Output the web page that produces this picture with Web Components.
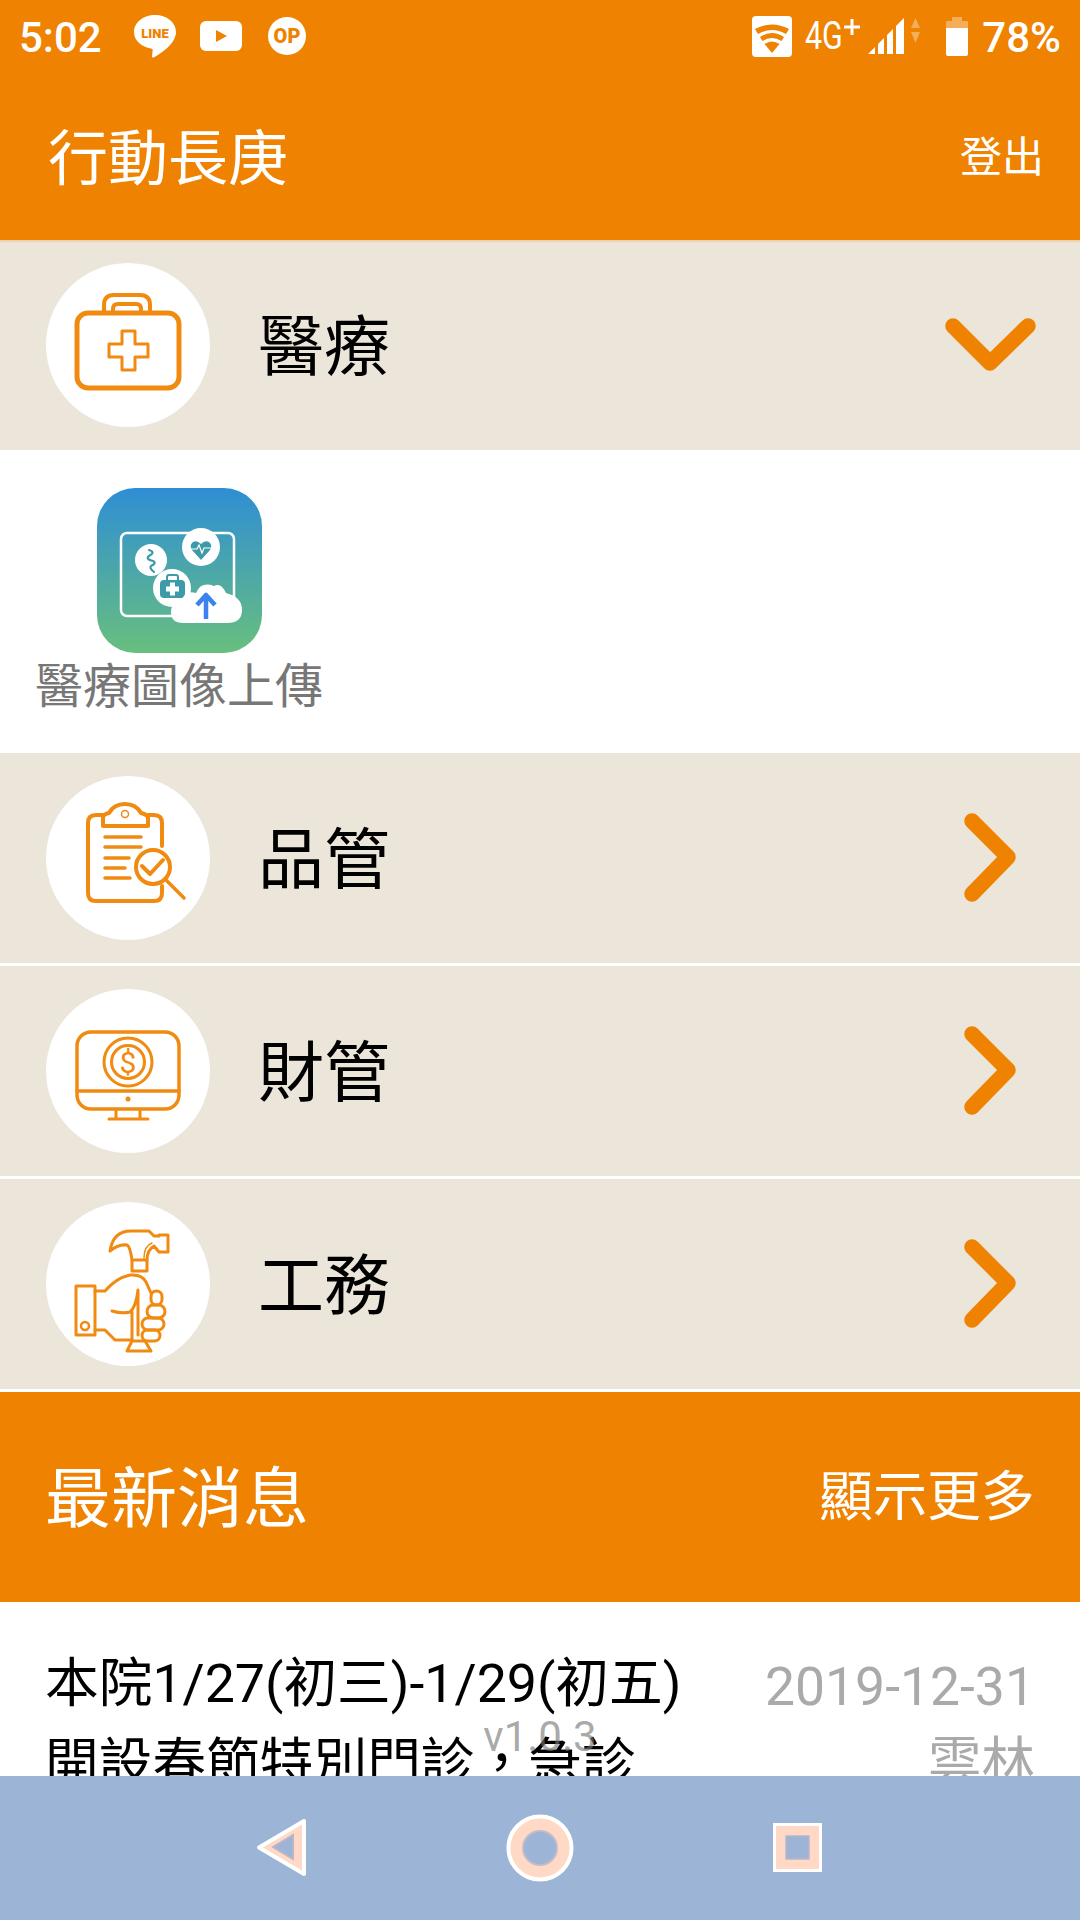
<!DOCTYPE html>
<html lang="zh-Hant">
<head>
<meta charset="utf-8">
<title>行動長庚</title>
<style>
  html, body { margin: 0; padding: 0; }
  body { width: 1080px; height: 1920px; overflow: hidden; background: #fff; font-family: Roboto, "Noto Sans CJK TC", sans-serif; }
</style>
</head>
<body>
<app-shell>
  <status-bar></status-bar>
  <top-bar title="行動長庚" action="登出"></top-bar>
  <menu-row label="醫療" arrow="down" class="first"><line-icon slot="icon" name="kit"></line-icon></menu-row>
  <app-tray><app-tile label="醫療圖像上傳"></app-tile></app-tray>
  <menu-row label="品管" arrow="right"><line-icon slot="icon" name="clipboard"></line-icon></menu-row>
  <menu-row label="財管" arrow="right" class="sep"><line-icon slot="icon" name="monitor"></line-icon></menu-row>
  <menu-row label="工務" arrow="right" class="sep"><line-icon slot="icon" name="hammer"></line-icon></menu-row>
  <news-bar title="最新消息" more="顯示更多"></news-bar>
  <news-item date="2019-12-31" place="雲林">本院1/27(初三)-1/29(初五)<br>開設春節特別門診，急診</news-item>
  <version-tag>v1.0.3</version-tag>
  <nav-bar></nav-bar>
</app-shell>

<script>
const ORANGE = '#ef8200'

class AppShell extends HTMLElement {
    constructor() {
        super()
        this.attachShadow({ mode: 'open' }).innerHTML = `
            <style>
                :host { display: flex; flex-direction: column; position: relative; width: 1080px; height: 1920px; overflow: hidden; background: #fff; }
            </style>
            <slot></slot>`
    }
}

class StatusBar extends HTMLElement {
    constructor() {
        super()
        this.attachShadow({ mode: 'open' }).innerHTML = `
            <style>
                :host { display: flex; align-items: center; height: 72px; flex: none; background: ${ORANGE}; color: #fff; font: 500 42px Roboto, sans-serif; box-sizing: border-box; padding: 0 19px; }
                svg { display: block; flex: none; }
                .time { width: 115px; padding-top: 2px; }
                .left { display: flex; align-items: center; gap: 24px; }
                .right { display: flex; align-items: center; margin-left: auto; }
                .net { font-size: 38px; font-weight: 400; transform: scaleX(.8); transform-origin: left center; width: 38px; margin-left: 13px; }
                .pct { margin-left: 14px; padding-top: 2px; }
            </style>
            <div class="time">5:02</div>
            <div class="left">
                <svg width="42" height="44" viewBox="0 0 42 44">
                    <path d="M21 1C9.500 1 0 8.400 0 18c0 9 8 15 17 16.500 1.500.3 2 1 1.500 3l-.5 5c0 1 1 1.500 2 .8C28 39 42 29 42 18 42 8.400 32.500 1 21 1z" fill="#fff"/>
                    <text x="21" y="24" font-family="Roboto" font-size="13" font-weight="900" fill="${ORANGE}" text-anchor="middle">LINE</text>
                </svg>
                <svg width="42" height="30" viewBox="0 0 42 30">
                    <rect width="42" height="30" rx="6" fill="#fff"/>
                    <path d="M16 9l11 6-11 6z" fill="${ORANGE}"/>
                </svg>
                <svg width="38" height="38" viewBox="0 0 38 38" style="margin-left:2px">
                    <circle cx="19" cy="19" r="19" fill="#fff"/>
                    <text x="19" y="26" font-family="Roboto" font-size="20" font-weight="900" fill="${ORANGE}" text-anchor="middle">OP</text>
                </svg>
            </div>
            <div class="right">
                <svg width="40" height="41" viewBox="0 0 40 41">
                    <rect width="40" height="41" rx="4" fill="#fff"/>
                    <path d="M3 13Q20 4 37 13L34 18Q20 10 6 18z" fill="${ORANGE}"/>
                    <path d="M8 21Q20 13 32 21L29.500 25Q20 19 10.500 25z" fill="${ORANGE}"/>
                    <path d="M12.500 28Q20 23 27.500 28L20 37z" fill="${ORANGE}"/>
                </svg>
                <div class="net">4G</div>
                <svg width="18" height="18" viewBox="0 0 18 18" style="margin-top:-18px">
                    <path d="M7.500 1h3v6.500H17v3h-6.500V17h-3v-6.500H1v-3h6.500z" fill="#fff"/>
                </svg>
                <svg width="54" height="38" viewBox="0 0 54 38" style="margin-left:7px">
                    <path d="M0 37L7 30V37zM10 27L16 21V37H10zM19 18L25 12V37H19zM28 9L36 1V37H28z" fill="#fff"/>
                    <path d="M47.500 1L52 11H43zM43 15H52L47.500 26z" fill="#fff" fill-opacity=".35"/>
                </svg>
                <svg width="22" height="39" viewBox="0 0 22 39" style="margin-left:24px">
                    <path d="M6 0h10v4h5a1 1 0 0 1 1 1v6H0V5a1 1 0 0 1 1-1h5z" fill="#fff" fill-opacity=".35"/>
                    <path d="M0 11h22v26a2 2 0 0 1-2 2H2a2 2 0 0 1-2-2z" fill="#fff"/>
                </svg>
                <div class="pct">78%</div>
            </div>`
    }
}

class TopBar extends HTMLElement {
    constructor() {
        super()
        this.attachShadow({ mode: 'open' }).innerHTML = `
            <style>
                :host { display: flex; align-items: center; justify-content: space-between; flex: none; height: 168px; box-sizing: border-box; background: ${ORANGE}; color: #fff; padding: 0 36px 6px 48px; font-family: "Noto Sans CJK TC", sans-serif; }
                .title { font-size: 60px; }
                .action { font-size: 42px; }
            </style>
            <div class="title">${this.getAttribute('title')}</div>
            <div class="action">${this.getAttribute('action')}</div>`
    }
}

class MenuRow extends HTMLElement {
    constructor() {
        super()
        const arrow = this.getAttribute('arrow') === 'down'
            ? 'M13 31L50 68L88 31'
            : 'M32 13L68 49L32 86'
        this.attachShadow({ mode: 'open' }).innerHTML = `
            <style>
                :host { display: flex; align-items: center; flex: none; height: 210px; background: #ebe5da; padding: 0 40px 0 46px; box-sizing: border-box; font-family: "Noto Sans CJK TC", sans-serif; color: #000; }
                :host(.sep) { margin-top: 3px; }
                :host(.first) { background: linear-gradient(rgba(239,130,0,.25), transparent 3px), #ebe5da; }
                .circle { width: 164px; height: 164px; border-radius: 50%; background: #fff; flex: none; }
                .label { font-size: 66px; margin-left: 48px; flex: 1; padding-bottom: 8px; }
                svg { display: block; flex: none; }
            </style>
            <div class="circle"><slot name="icon"></slot></div>
            <div class="label">${this.getAttribute('label')}</div>
            <svg width="100" height="100" viewBox="0 0 100 100">
                <path d="${arrow}" fill="none" stroke="${ORANGE}" stroke-width="15.500" stroke-linecap="round" stroke-linejoin="round"/>
            </svg>`
    }
}

const ICONS = {
    kit: `
        <rect x="31" y="50" width="102" height="75" rx="11" stroke-width="5"/>
        <path d="M58 49v-7q0-10 10-10h26q10 0 10 10v7M67 49v-3q0-5 5-5h18q5 0 5 5v3" stroke-width="4"/>
        <path d="M76 68h13v13h13v13H89v13H76V94H63V81h13z" stroke-width="3"/>`,
    clipboard: `
        <path d="M57 39H50q-8 0-8 8V117q0 8 8 8H108q8 0 8-8v-7M102 39h6q8 0 8 8V70" stroke-width="4"/>
        <path d="M57 50h45v-9q-2-3-7-4Q90 28 79 28T63 37q-5 1-6 4z" stroke-width="4"/>
        <circle cx="79" cy="38" r="3.500" stroke-width="1.500"/>
        <path d="M59 61H95M59 71H95M59 82H83M59 92H79M59 102H84" stroke-width="3.500"/>
        <circle cx="107" cy="91" r="17" stroke-width="4"/>
        <path d="M96 90L104 98L117 84" stroke-width="4"/>
        <path d="M119 103L138 122" stroke-width="3.500"/>`,
    monitor: `
        <rect x="31" y="43" width="102" height="77" rx="14" stroke-width="3.500"/>
        <path d="M31 102H133" stroke-width="3.500"/>
        <circle cx="82" cy="110" r="2.500" fill="#f18a10" stroke="none"/>
        <circle cx="82" cy="73" r="24" stroke-width="3"/>
        <circle cx="82" cy="73" r="16.500" stroke-width="3"/>
        <path d="M70 120V130M94 120V130M63 130H102" stroke-width="3"/>
        <text x="82" y="84" font-family="Roboto" font-size="30" fill="#f18a10" stroke="none" text-anchor="middle">$</text>`,
    hammer: `
        <path d="M86 58Q84 44 81 43Q72 42 64 49Q67 29 85 29H103L108 34H113V33H122V50H113L108 44Q101 48 101 58" stroke-width="3"/>
        <path d="M98 56Q98 44 106 41" stroke-width="1.500"/>
        <rect x="86" y="58" width="15" height="11" stroke-width="3"/>
        <rect x="30" y="84" width="19" height="49" stroke-width="3"/>
        <circle cx="39" cy="124" r="4" stroke-width="2.500"/>
        <path d="M49 89H59Q70 76 84 73Q96 72 100 80L105 91" stroke-width="3"/>
        <path d="M49 128H59L69 138H86" stroke-width="3"/>
        <path d="M66 109Q76 112 84 110Q90 105 92 88V133" stroke-width="3"/>
        <path d="M86 110V139M99 139H86L81 149H105L99 139" stroke-width="3"/>
        <rect x="105" y="89" width="11" height="14" rx="5.500" stroke-width="3"/>
        <rect x="101" y="103" width="18" height="13" rx="6.500" stroke-width="3"/>
        <rect x="96" y="116" width="22" height="12" rx="6" stroke-width="3"/>
        <rect x="96" y="128" width="18" height="11" rx="5.500" stroke-width="3"/>`
}

class LineIcon extends HTMLElement {
    constructor() {
        super()
        this.attachShadow({ mode: 'open' }).innerHTML = `
            <style>
                :host { display: block; width: 164px; height: 164px; }
                svg { display: block; }
            </style>
            <svg width="164" height="164" viewBox="0 0 164 164" fill="none" stroke="#f18a10" stroke-linecap="round" stroke-linejoin="round">
                ${ICONS[this.getAttribute('name')]}
            </svg>`
    }
}

class AppTray extends HTMLElement {
    constructor() {
        super()
        this.attachShadow({ mode: 'open' }).innerHTML = `
            <style>
                :host { display: flex; flex: none; height: 303px; box-sizing: border-box; padding: 38px 0 0 35px; background: #fff; }
            </style>
            <slot></slot>`
    }
}

class AppTile extends HTMLElement {
    constructor() {
        super()
        this.attachShadow({ mode: 'open' }).innerHTML = `
            <style>
                :host { display: flex; flex-direction: column; align-items: center; width: 288px; font-family: "Noto Sans CJK TC", sans-serif; }
                svg { display: block; }
                .label { font-size: 48px; line-height: 66px; margin-top: -4px; color: #777; white-space: nowrap; }
            </style>
            <svg width="165" height="165" viewBox="0 0 165 165">
                <defs>
                    <linearGradient id="g" x1="0" y1="0" x2="0" y2="1">
                        <stop offset="0" stop-color="#2f8ed4"/>
                        <stop offset="1" stop-color="#68bf7e"/>
                    </linearGradient>
                </defs>
                <rect width="165" height="165" rx="38" fill="url(#g)"/>
                <rect x="24" y="45" width="113" height="83" rx="6" fill="none" stroke="#fff" stroke-width="2.500"/>
                <circle cx="104" cy="59" r="19" fill="#fff"/>
                <path d="M104 72L95 62Q92 57 96 54Q100 52 104 56Q108 52 112 54Q116 57 113 62z" fill="#3d9aa8"/>
                <path d="M93 61H100L102 57L105 65L107 60H115" fill="none" stroke="#fff" stroke-width="1.200"/>
                <circle cx="54" cy="72" r="16" fill="#fff"/>
                <path d="M52 62Q59 64 52 68Q48 71 56 73Q60 75 54 78Q52 80 57 84" fill="none" stroke="#3d9aa8" stroke-width="2.200" stroke-linecap="round"/>
                <circle cx="75" cy="100" r="19" fill="#fff"/>
                <rect x="63" y="92" width="25" height="18" rx="4" fill="#3d9aa8"/>
                <path d="M70 92v-3q0-2 2-2h7q2 0 2 2v3" fill="none" stroke="#3d9aa8" stroke-width="2"/>
                <path d="M73 94.500h5v4h4v5h-4v4h-5v-4h-4v-5h4z" fill="#fff"/>
                <path d="M86 135Q74 135 74 124Q74 114 85 113Q87 102 99 105Q104 93 117 98Q124 94 129 105Q145 109 145 122Q145 135 130 135z" fill="#fff"/>
                <path d="M109 131V108M100 117L109 107L118 117" fill="none" stroke="#3b82f0" stroke-width="4.500" stroke-linejoin="round"/>
            </svg>
            <div class="label">${this.getAttribute('label')}</div>`
    }
}

class NewsBar extends HTMLElement {
    constructor() {
        super()
        this.attachShadow({ mode: 'open' }).innerHTML = `
            <style>
                :host { display: flex; align-items: center; justify-content: space-between; flex: none; height: 210px; box-sizing: border-box; margin-top: 3px; background: ${ORANGE}; color: #fff; padding: 0 45px 9px 45px; font-family: "Noto Sans CJK TC", sans-serif; }
                .title { font-size: 66px; }
                .more { font-size: 54px; }
            </style>
            <div class="title">${this.getAttribute('title')}</div>
            <div class="more">${this.getAttribute('more')}</div>`
    }
}

class NewsItem extends HTMLElement {
    constructor() {
        super()
        this.attachShadow({ mode: 'open' }).innerHTML = `
            <style>
                :host { display: flex; justify-content: space-between; flex: none; padding: 42px 45px 0 45px; font: 53.700px/80px Roboto, "Noto Sans CJK TC", sans-serif; }
                .text { color: #000; white-space: nowrap; }
                .meta { color: #aaa; text-align: right; font-size: 53.500px; line-height: 76px; padding-top: 5px; }
            </style>
            <div class="text"><slot></slot></div>
            <div class="meta">${this.getAttribute('date')}<br>${this.getAttribute('place')}</div>`
    }
}

// sits over the news list, same as the app footer
class VersionTag extends HTMLElement {
    constructor() {
        super()
        this.attachShadow({ mode: 'open' }).innerHTML = `
            <style>
                :host { position: absolute; left: 0; right: 0; top: 1712px; text-align: center; font: 42px/50px Roboto, sans-serif; color: rgba(120,120,120,.65); }
            </style>
            <slot></slot>`
    }
}

class NavBar extends HTMLElement {
    constructor() {
        super()
        this.attachShadow({ mode: 'open' }).innerHTML = `
            <style>
                :host { position: absolute; left: 0; right: 0; bottom: 0; height: 144px; background: #9cb4d5; display: flex; align-items: center; justify-content: center; gap: 178px; }
                svg { display: block; flex: none; }
            </style>
            <svg width="80" height="80" viewBox="0 0 80 80">
                <path d="M62 13V66L17 39.500z" fill="#ffd9c6" stroke="#fff" stroke-width="4" stroke-linejoin="round"/>
                <path d="M51 27V51L31 39z" fill="#9cb4d5" stroke="#bcb5ca" stroke-width="2"/>
            </svg>
            <svg width="80" height="80" viewBox="0 0 80 80">
                <circle cx="40" cy="40" r="31.500" fill="#ffd9c6" stroke="#fff" stroke-width="4"/>
                <circle cx="40" cy="40" r="17" fill="#9cb4d5" stroke="#c4bacb" stroke-width="2"/>
            </svg>
            <svg width="80" height="80" viewBox="0 0 80 80">
                <rect x="16.500" y="16.500" width="46" height="46" fill="#ffd9c6" stroke="#fff" stroke-width="3"/>
                <rect x="28" y="28" width="23" height="23" fill="#9cb4d5" stroke="#bcb5ca" stroke-width="1.500"/>
            </svg>`
    }
}

window.customElements.define('app-shell', AppShell)
window.customElements.define('status-bar', StatusBar)
window.customElements.define('top-bar', TopBar)
window.customElements.define('menu-row', MenuRow)
window.customElements.define('line-icon', LineIcon)
window.customElements.define('app-tray', AppTray)
window.customElements.define('app-tile', AppTile)
window.customElements.define('news-bar', NewsBar)
window.customElements.define('news-item', NewsItem)
window.customElements.define('version-tag', VersionTag)
window.customElements.define('nav-bar', NavBar)
</script>
</body>
</html>
